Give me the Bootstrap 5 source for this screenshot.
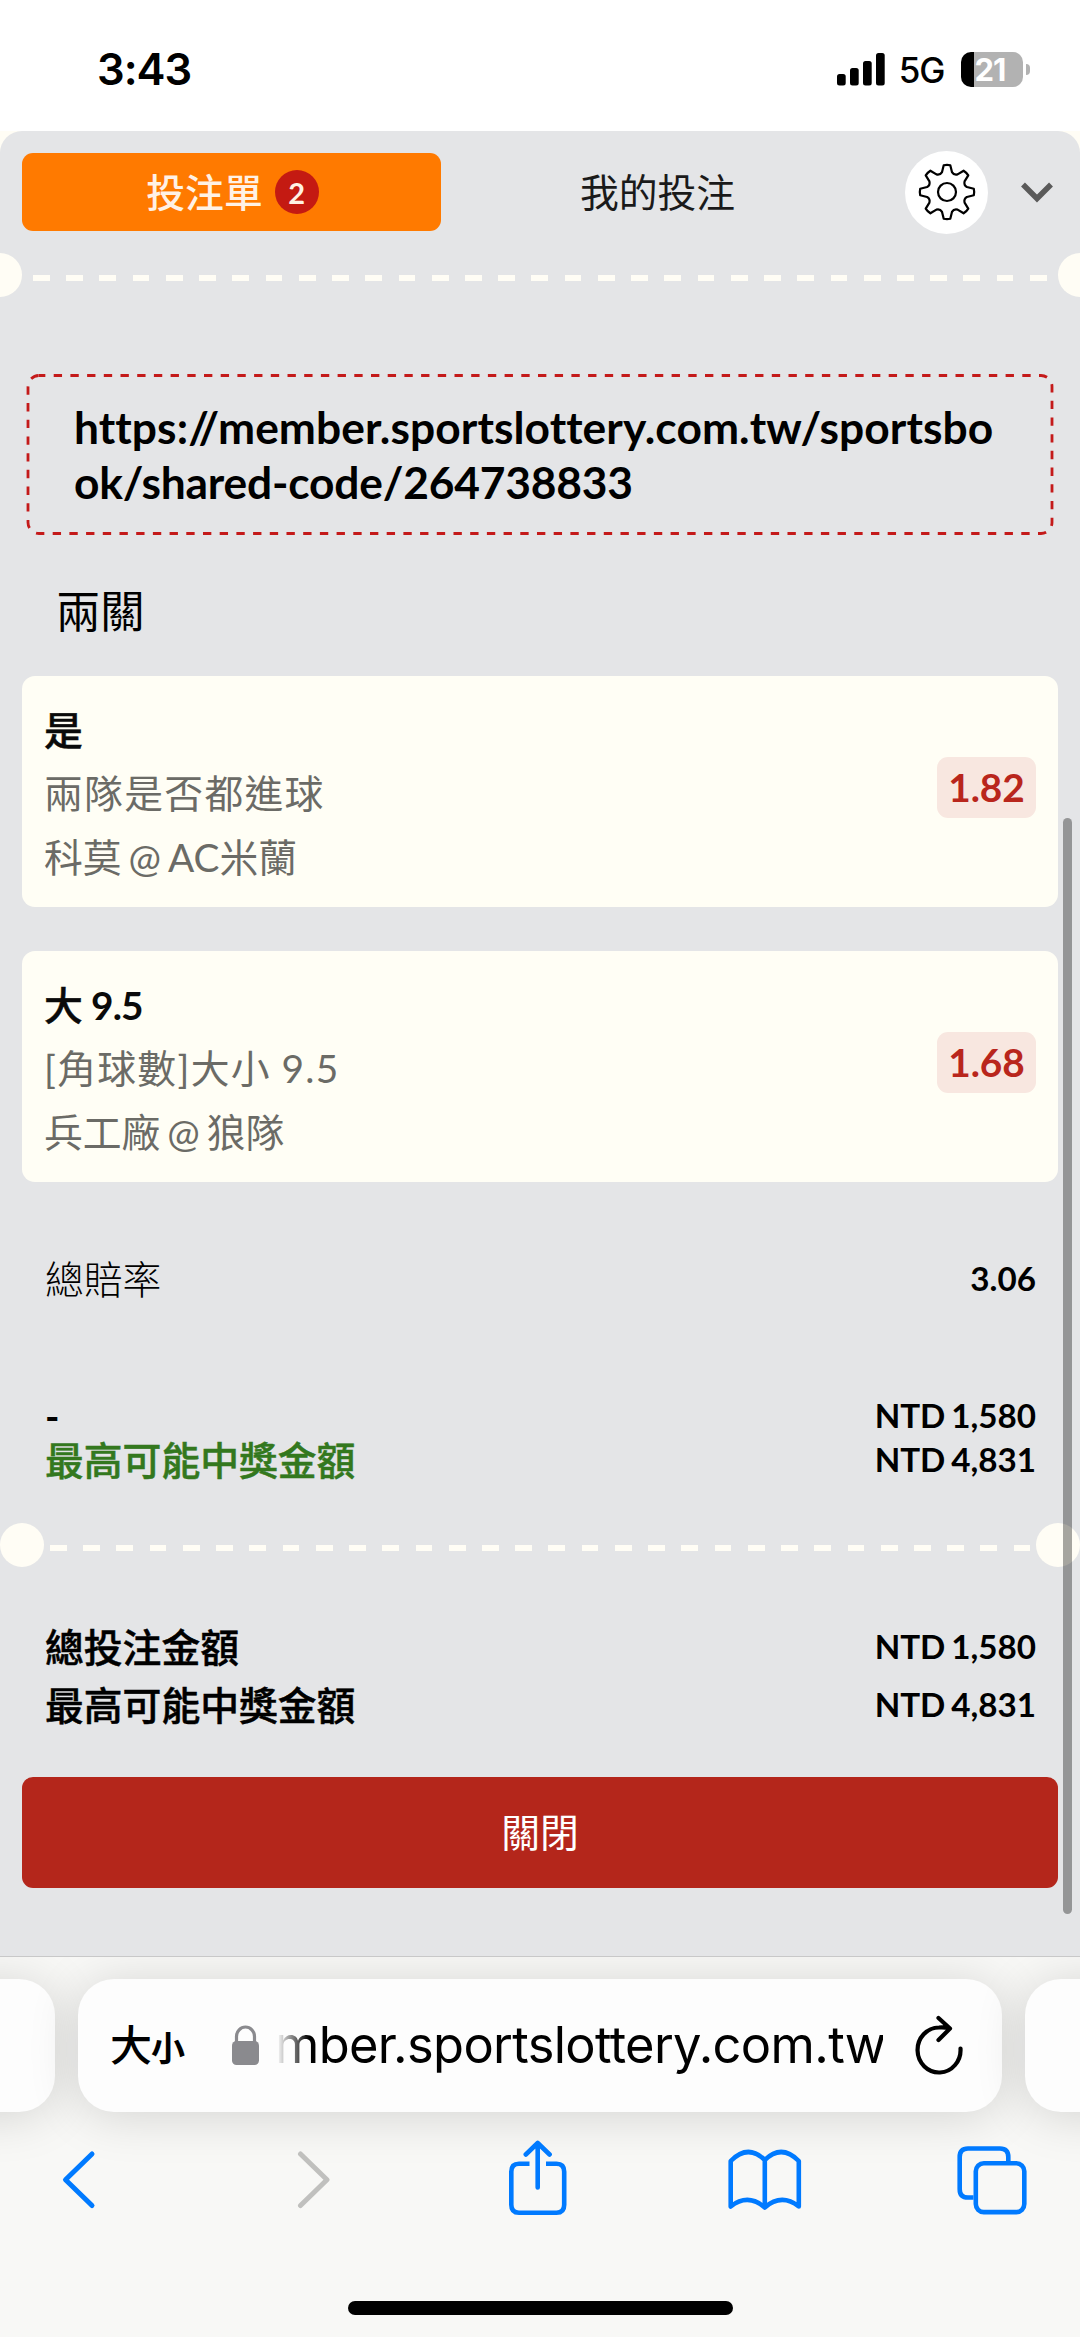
<!DOCTYPE html>
<html lang="zh-Hant">
<head>
<meta charset="utf-8">
<meta name="viewport" content="width=device-width, initial-scale=1">
<title>投注單</title>
<link href="https://cdn.jsdelivr.net/npm/bootstrap@5.3.0/dist/css/bootstrap.min.css" rel="stylesheet">
<style>
:root{--cream:#fffdf5;--sheet:#e4e5e7;--brick:#b4261b}
body{width:1080px;height:2337px;overflow:hidden;background:#fff;color:#000;font-family:Lato,"Noto Sans CJK TC",sans-serif;font-size:38.8px;line-height:1;font-variant-ligatures:none}
svg{display:block;flex:none}
.statusbar{height:131px;padding:0 50px 0 97px;font-family:Inter,sans-serif}
.clock{font-size:43.5px;font-weight:600;line-height:44px;padding-top:6px;letter-spacing:-1px}
.net{font-size:35px;font-weight:500;letter-spacing:-1px;line-height:40px;margin:0 16px 0 14px}
.battery{width:62.5px;height:35px;border-radius:10px;background:linear-gradient(90deg,#000 13px,#b2b2b2 13px);color:#fff;font-weight:700;font-size:31px;line-height:35px;padding-left:14px;letter-spacing:-1px}
.nub{width:4.5px;height:11px;border-radius:0 6px 6px 0;background:#b2b2b2;margin-left:2.5px}
.backdrop{background:var(--cream);height:1825px}
.sheet{background:var(--sheet);height:1825px;border-radius:22px 22px 0 0}
.tabbar{height:122px;padding:0 22px}
.tab-slip{width:419px;height:78px;border-radius:11px;background:#ff7a00;color:#fff1e5;font-weight:500;padding-left:2px}
.count{width:44px;height:44px;background:#c41a12;font-size:29px;font-weight:700;margin-left:12px}
.tab-mine{width:433px;color:#1a1a1a}
.gear{width:83px;height:83px;background:#fff;margin-left:31px}
.tear{height:44px}
.tear .knob{width:44px;height:44px;border-radius:50%;background:var(--cream);flex:none}
.tear .dashes{height:6px;margin-top:22px;flex:1;background:repeating-linear-gradient(90deg,var(--cream) 0 16.8px,transparent 16.8px 33.23px)}
.tear.edge{margin:0 -22px}
.tear.edge .dashes{margin-left:11px;margin-right:11px}
.tear.inset .dashes{margin-left:5.5px;margin-right:5.5px}
.sharebox{margin:77px 26px 0;height:161px;padding:25px 46px 0 48px;position:relative;font-size:44.3px;line-height:55.4px;font-weight:700;word-break:break-all;letter-spacing:-.18px}
.sharebox .host{letter-spacing:.08px}
.sharebox svg{position:absolute;left:0;top:0}
.legs{font-size:44.3px;line-height:50px;margin:51px 0 0 56px;height:90px}
.betcard{height:231px;margin:0 22px;border-radius:13px;background:#fffef5;padding:23px 22px 0}
.betcard + .betcard{margin-top:44px}
.betcard p{margin:0;line-height:63.3px;white-space:nowrap;color:#6b6b66;word-spacing:-3px}
.betcard p.pick{color:#0a0a0a;word-spacing:-1.5px}
.strong-cjk{font-weight:500;-webkit-text-stroke:.5px currentColor}
.pick .num{letter-spacing:-.9px;font-weight:700;-webkit-text-stroke:0}
.betcard p.market{letter-spacing:1.3px;word-spacing:-.5px}
.odds{width:99px;height:61px;border-radius:11px;background:#f8e7e0;color:#b9261c;font-weight:700;font-size:38.8px;margin-top:58px}
.sumrow{margin:0 44px 0 45px;white-space:nowrap}
.sumrow .amt{font-size:33.2px;font-weight:700;word-spacing:-2.2px}
.green{color:#33781e}
.closebtn{margin:0 22px;height:111px;width:1036px;border-radius:11px;background:var(--brick);color:#fff;font-size:38.8px}
.scrollthumb{position:absolute;left:1063px;top:818px;width:9px;height:1096px;border-radius:5px;background:rgba(0,0,0,.35)}
.browser{height:381px;background:#f8f8f6;border-top:1.5px solid #c8c8c8;overflow:hidden}
.pills{padding-top:21.5px;gap:23px;width:1440px;margin-left:-145px}
.pill{height:133px;border-radius:36px;background:#fdfdfd;flex:none;box-shadow:0 4px 50px rgba(0,0,0,.15)}
.pill.side{width:200px}
.pill.main{width:924px;padding-left:32px}
.aa{font-size:42px;font-weight:500;letter-spacing:-1px;width:80px}
.aa span{font-size:34px;font-weight:700}
.addr{font-family:Inter,sans-serif;font-size:50.6px;line-height:70px;letter-spacing:-.65px;width:608px;text-align:right;-webkit-mask-image:linear-gradient(90deg,transparent 2px,#000 34px);mask-image:linear-gradient(90deg,transparent 2px,#000 34px);white-space:nowrap}
.home{width:385px;height:14px;border-radius:7px;background:#000}
</style>
</head>
<body class="position-relative">
<header class="statusbar d-flex align-items-center justify-content-between">
  <div class="clock">3:43</div>
  <div class="d-flex align-items-center pt-2">
    <svg width="48" height="33" viewBox="0 0 48 33"><rect y="21" width="8.7" height="11.5" rx="2.5"/><rect x="13" y="15" width="8.7" height="17.5" rx="2.5"/><rect x="26" y="8" width="8.7" height="24.5" rx="2.5"/><rect x="39" y="0" width="8.7" height="32.5" rx="2.5"/></svg>
    <span class="net">5G</span>
    <div class="battery">21</div><div class="nub"></div>
  </div>
</header>
<div class="backdrop">
<main class="sheet">
  <nav class="tabbar d-flex align-items-center">
    <div class="tab-slip d-flex align-items-center justify-content-center">投注單<span class="count rounded-circle d-flex align-items-center justify-content-center">2</span></div>
    <div class="tab-mine text-center">我的投注</div>
    <div class="gear rounded-circle d-flex align-items-center justify-content-center">
      <svg width="58" height="58" viewBox="-29 -29 58 58" fill="none" stroke="#000" stroke-width="2.2" stroke-linejoin="round"><circle r="9"/><path id="cog"/></svg>
    </div>
    <svg class="ms-auto" style="margin-right:3px" width="36" height="22" viewBox="0 0 36 22" fill="none" stroke="#5a5a5a" stroke-width="5.5"><path d="M4 3.500L18 17.500L32 3.500"/></svg>
  </nav>
  <div class="overflow-hidden"><div class="tear edge d-flex"><i class="knob"></i><i class="dashes"></i><i class="knob"></i></div></div>
  <div class="sharebox"><span class="host">https://member.sportslottery.com.tw/sportsbo</span>ok/shared-code/264738833
    <svg width="1028" height="161" fill="none" stroke="#c41a1a" stroke-width="2.8"><rect x="2" y="1.500" width="1024" height="158" rx="11" stroke-dasharray="8.35 8.35" stroke-dashoffset="2"/></svg>
  </div>
  <div class="legs">兩關</div>
  <section class="betcard d-flex justify-content-between">
    <div><p class="pick strong-cjk">是</p><p class="market">兩隊是否都進球</p><p>科莫 @ AC米蘭</p></div>
    <div class="odds d-flex align-items-center justify-content-center">1.82</div>
  </section>
  <section class="betcard d-flex justify-content-between">
    <div><p class="pick strong-cjk">大 <span class="num">9.5</span></p><p class="market">[角球數]大小 9.5</p><p>兵工廠 @ 狼隊</p></div>
    <div class="odds d-flex align-items-center justify-content-center">1.68</div>
  </section>
  <div class="sumrow d-flex justify-content-between align-items-center" style="margin-top:70px;height:54px"><span class="fw-light">總賠率</span><span class="amt">3.06</span></div>
  <div class="sumrow d-flex justify-content-between align-items-center" style="margin-top:88px;height:44px"><b>-</b><span class="amt">NTD 1,580</span></div>
  <div class="sumrow d-flex justify-content-between align-items-center" style="height:44px"><span class="green strong-cjk">最高可能中獎金額</span><span class="amt">NTD 4,831</span></div>
  <div class="tear inset d-flex" style="margin-top:41px"><i class="knob"></i><i class="dashes"></i><i class="knob"></i></div>
  <div class="sumrow d-flex justify-content-between align-items-center" style="margin-top:51px;height:58px"><span class="strong-cjk">總投注金額</span><span class="amt">NTD 1,580</span></div>
  <div class="sumrow d-flex justify-content-between align-items-center" style="height:58px"><span class="strong-cjk">最高可能中獎金額</span><span class="amt">NTD 4,831</span></div>
  <button class="btn closebtn d-flex align-items-center justify-content-center" style="margin-top:43px">關閉</button>
</main>
</div>
<div class="scrollthumb"></div>
<footer class="browser">
  <div class="pills d-flex">
    <div class="pill side"></div>
    <div class="pill main d-flex align-items-center">
      <div class="aa">大<span>小</span></div>
      <svg style="margin-left:41px" width="29" height="40" viewBox="0 0 29 40"><path d="M5.500 18V11.500a9 9.500 0 0 1 18 0V18" fill="none" stroke="#8a8a8e" stroke-width="3.2"/><rect x="1" y="16" width="27" height="24" rx="4.500" fill="#8a8a8e"/></svg>
      <div class="addr" style="margin-left:15px">mber.sportslottery.com.tw</div>
      <svg style="margin-left:31px" width="50" height="62" viewBox="913 2014 50 62" fill="none" stroke="#000" stroke-width="4.200" stroke-linecap="round" stroke-linejoin="round"><path d="M959.500 2048.500A21.500 22.500 0 1 1 938 2027.500Q944 2027 948 2028.500M937.500 2018L949 2028.500L937.500 2040"/></svg>
    </div>
    <div class="pill side"></div>
  </div>
  <div class="d-flex" style="padding:28px 0 0 60px">
    <svg width="36" height="78" viewBox="60 2140 36 78" fill="none" stroke="#007aff" stroke-width="5" stroke-linecap="round" stroke-linejoin="round"><path d="M92 2154L65.500 2179.700L92 2205.500"/></svg>
    <svg style="margin-left:201px" width="36" height="78" viewBox="297 2140 36 78" fill="none" stroke="#c0c0be" stroke-width="5" stroke-linecap="round" stroke-linejoin="round"><path d="M300.500 2154L327 2179.700L300.500 2205.500"/></svg>
    <svg style="margin-left:175px" width="60" height="78" viewBox="508 2140 60 78" fill="none" stroke="#007aff" stroke-width="4.600"><path d="M529.500 2163.800H519q-7.700 0-7.700 8v33q0 8 7.700 8h37.500q7.700 0 7.700-8v-33q0-8-7.700-8H546"/><path stroke-linecap="round" stroke-linejoin="round" d="M537.700 2143.500V2187.500M525.800 2154.500L537.700 2143L549.600 2154.500"/></svg>
    <svg style="margin-left:159px" width="76" height="78" viewBox="727 2140 76 78" fill="none" stroke="#007aff" stroke-width="4.600" stroke-linecap="round" stroke-linejoin="round"><path d="M764.800 2160V2207.500Q748 2193 730.700 2206.500V2161Q748 2143.500 764.800 2160Q781.500 2143.500 798.800 2161V2206.500Q781.500 2193 764.800 2207.500"/></svg>
    <svg style="margin-left:153px" width="72" height="78" viewBox="956 2140 72 78" fill="none" stroke="#007aff" stroke-width="4.600"><path d="M973.500 2197.500h-5.500q-8.300 0-8.300-8.300V2157q0-8.500 8.300-8.500h32q8.300 0 8.300 8.500v5"/><rect x="975.800" y="2163.300" width="48.500" height="48.800" rx="8"/></svg>
  </div>
  <div class="home mx-auto" style="margin-top:83px"></div>
</footer>
<script src="https://cdn.jsdelivr.net/npm/bootstrap@5.3.0/dist/js/bootstrap.bundle.min.js"></script>
<script>
// Eight-tooth cog outline: each tooth is a flat tip, joined to the next by a curved valley.
(function(){
  var d='',N=8;
  function p(r,deg){var a=deg*Math.PI/180;return (r*Math.sin(a)).toFixed(2)+' '+(-r*Math.cos(a)).toFixed(2);}
  for(var i=0;i<N;i++){
    var c=i*45;
    d+=(i?'L':'M')+p(27,c-7)+'Q'+p(27.6,c)+' '+p(27,c+7)+'L'+p(20.500,c+14)+'Q'+p(18,c+22.500)+' '+p(20.500,c+31);
  }
  document.getElementById('cog').setAttribute('d',d+'Z');
})();
</script>
</body>
</html>
